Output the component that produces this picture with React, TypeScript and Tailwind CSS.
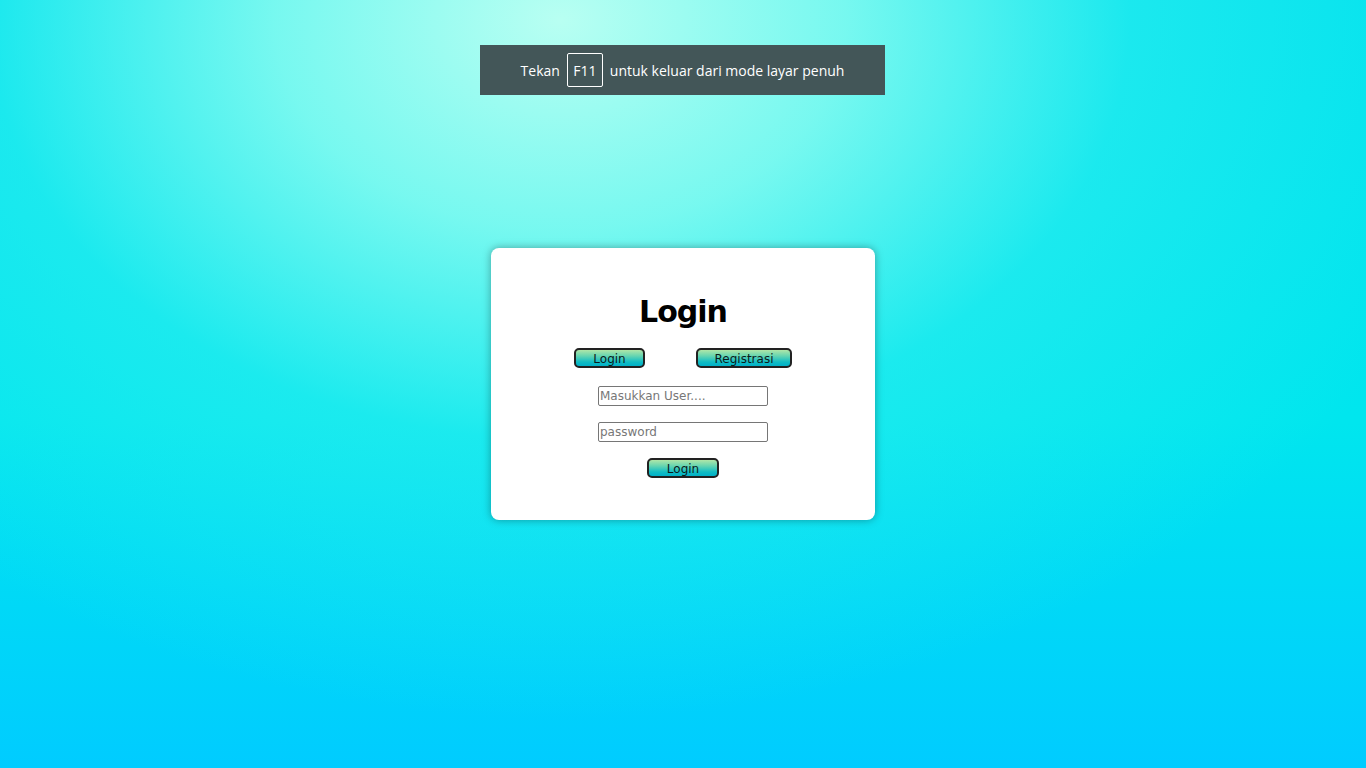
const Btn = ({label, w}: {label: string; w: string}) => (
    <button
        className={`${w} h-[20px] rounded-[5px] border-2 border-[#222] bg-[linear-gradient(to_bottom,#b0e6a8_0%,#6ad6b0_35%,#10bcc4_75%,#00b0c8_100%)] text-[12px] leading-none pt-[1px] text-[#0a1a1a] font-['DejaVu_Sans',sans-serif] flex items-center justify-center`}
    >
        {label}
    </button>
);

const App = () => {
    return (
        <div className="relative w-full h-screen overflow-hidden flex items-center justify-center bg-[radial-gradient(ellipse_950px_700px_at_560px_20px,#b8fff2_0%,rgba(140,252,240,0.85)_30%,rgba(60,240,238,0.45)_60%,rgba(0,230,238,0)_100%),linear-gradient(to_bottom,#00e2ee_0%,#00e6ee_55%,#00ccff_100%)]">
            {/* fullscreen notice */}
            <div className="absolute top-[45px] left-[480px] w-[405px] h-[50px] bg-[#435658] flex items-center justify-center gap-[7px] text-white text-[14px] font-['Open_Sans','Noto_Sans',sans-serif]">
                <span>Tekan</span>
                <span className="border border-white rounded-[2px] h-[34px] w-[36px] flex items-center justify-center">F11</span>
                <span>untuk keluar dari mode layar penuh</span>
            </div>

            <div className="w-[384px] h-[272px] bg-white rounded-lg shadow-[0_0_8px_rgba(0,0,0,0.35)] flex flex-col items-center pt-[46px] font-['DejaVu_Sans',sans-serif]">
                <h1 className="text-[30px] leading-[36px] font-bold tracking-[-1px] text-black">Login</h1>
                <div className="mt-[18px] flex gap-[51px]">
                    <Btn label="Login" w="w-[71px]"/>
                    <Btn label="Registrasi" w="w-[96px]"/>
                </div>
                <input
                    type="text"
                    placeholder="Masukkan User...."
                    className="mt-[18px] w-[170px] h-[20px] border border-[#767676] rounded-[2px] px-[1px] text-[12px] placeholder:text-[#777] outline-none"
                />
                <input
                    type="password"
                    placeholder="password"
                    className="mt-[16px] w-[170px] h-[20px] border border-[#767676] rounded-[2px] px-[1px] text-[12px] placeholder:text-[#777] outline-none"
                />
                <div className="mt-[16px]">
                    <Btn label="Login" w="w-[72px]"/>
                </div>
            </div>
        </div>
    );
};

export default App;
